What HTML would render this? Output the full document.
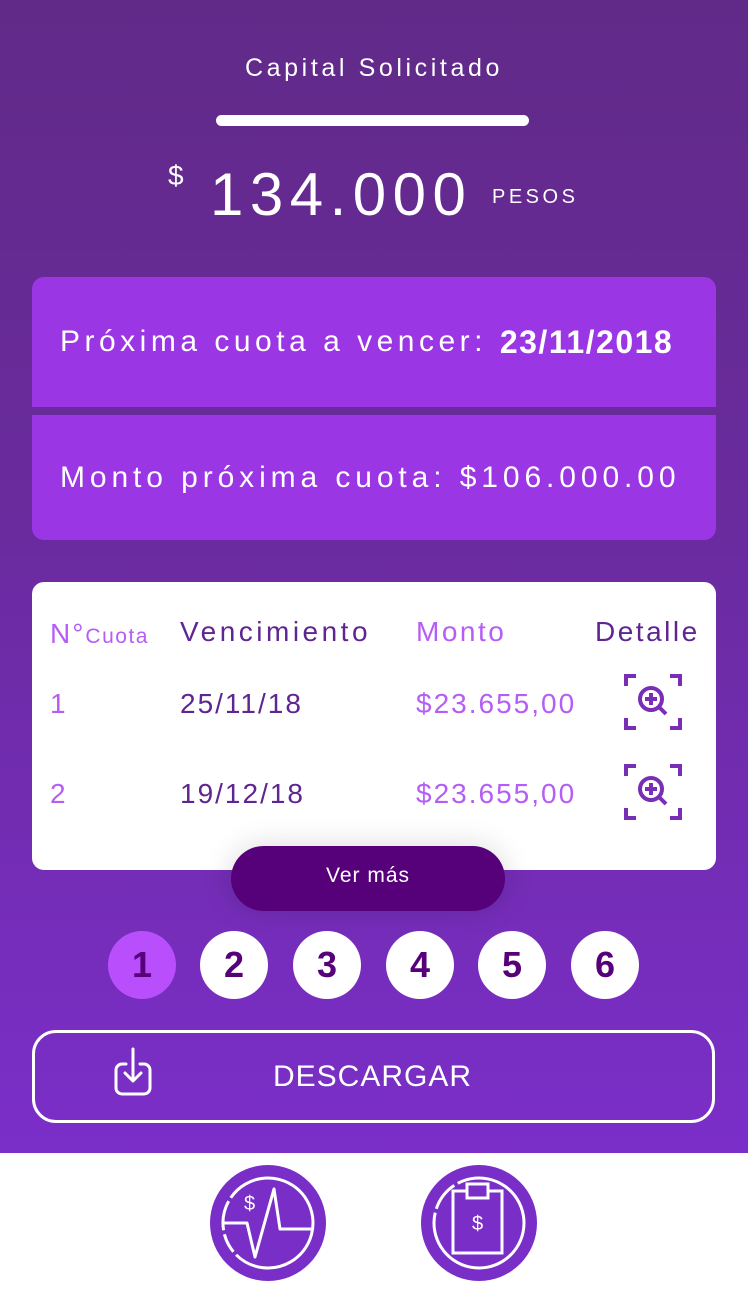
<!DOCTYPE html>
<html><head><meta charset="utf-8"><style>
*{margin:0;padding:0;box-sizing:border-box}
body{width:748px;height:1299px;position:relative;font-family:"Liberation Sans",sans-serif;background:#fff;overflow:hidden}
.bg{position:absolute;left:0;top:0;width:748px;height:1153px;background:linear-gradient(#612a88,#6a2b9e 45%,#7b2ec9)}
.a{position:absolute;white-space:nowrap}
.t{color:#fff;letter-spacing:2px}
.box{position:absolute;left:32px;width:684px;background:#9b36e4;color:#fff;font-size:30px;letter-spacing:4.5px;padding-left:28px;display:flex;align-items:center;white-space:nowrap}
.card{position:absolute;left:32px;top:582px;width:684px;height:288px;background:#fff;border-radius:12px}
.c{position:absolute;font-size:28px;letter-spacing:2px;white-space:nowrap}
.dk{color:#5f2590}.lt{color:#b55df5}
.circ{position:absolute;top:931px;width:68px;height:68px;border-radius:50%;background:#fff;color:#560079;font-weight:bold;font-size:36px;text-align:center;line-height:68px}
</style></head><body>
<div class="bg"></div>
<div class="a t" style="left:0;width:748px;top:54px;text-align:center;font-size:25px;letter-spacing:3.6px">Capital Solicitado</div>
<div class="a" style="left:216px;top:115px;width:313px;height:11px;border-radius:6px;background:#fff"></div>
<div class="a t" style="left:168px;top:160px;font-size:28px;letter-spacing:0">$</div>
<div class="a t" style="left:210px;top:160px;font-size:60px;letter-spacing:6.5px">134.000</div>
<div class="a t" style="left:492px;top:186px;font-size:20px;letter-spacing:3.5px">PESOS</div>
<div class="box" style="top:277px;height:130px;border-radius:12px 12px 0 0">Próxima cuota a vencer:&nbsp;<b style="letter-spacing:1.5px;font-size:32px">23/11/2018</b></div>
<div class="box" style="top:415px;height:125px;border-radius:0 0 12px 12px;letter-spacing:4.9px">Monto próxima cuota: $106.000.00</div>
<div class="card">
<div class="c lt" style="left:18px;top:36px">N°<span style="font-size:21px;letter-spacing:1.5px">Cuota</span></div>
<div class="c dk" style="left:148px;top:34px;letter-spacing:3.5px">Vencimiento</div>
<div class="c lt" style="left:384px;top:34px;letter-spacing:2.5px">Monto</div>
<div class="c dk" style="left:563px;top:34px;letter-spacing:2.5px">Detalle</div>
<div class="c lt" style="left:18px;top:106px">1</div>
<div class="c dk" style="left:148px;top:106px">25/11/18</div>
<div class="c lt" style="left:384px;top:106px">$23.655,00</div>
<div class="c lt" style="left:18px;top:196px">2</div>
<div class="c dk" style="left:148px;top:196px">19/12/18</div>
<div class="c lt" style="left:384px;top:196px">$23.655,00</div>
<svg class="a" style="left:592px;top:92px" width="58" height="56" viewBox="0 0 58 56" fill="none" stroke="#7a2db5" stroke-width="4"><path d="M2 12V2h10M46 2h10v10M2 44v10h10M46 54h10V44"/><circle cx="27" cy="25" r="11"/><path d="M35 33l7 7M27 19v12M21 25h12"/></svg>
<svg class="a" style="left:592px;top:182px" width="58" height="56" viewBox="0 0 58 56" fill="none" stroke="#7a2db5" stroke-width="4"><path d="M2 12V2h10M46 2h10v10M2 44v10h10M46 54h10V44"/><circle cx="27" cy="25" r="11"/><path d="M35 33l7 7M27 19v12M21 25h12"/></svg>
</div>
<div class="a" style="left:231px;top:846px;width:274px;height:65px;border-radius:33px;background:#560079;color:#fff;font-size:21px;letter-spacing:1px;text-align:center;line-height:60px;box-shadow:0 0 30px rgba(0,0,0,.15)">Ver más</div>
<div class="circ" style="left:108px;background:#b94ffc">1</div>
<div class="circ" style="left:200px">2</div>
<div class="circ" style="left:293px">3</div>
<div class="circ" style="left:386px">4</div>
<div class="circ" style="left:478px">5</div>
<div class="circ" style="left:571px">6</div>
<div class="a" style="left:32px;top:1030px;width:683px;height:93px;border:3px solid #fff;border-radius:24px"></div>
<svg class="a" style="left:112px;top:1046px" width="46" height="52" viewBox="0 0 46 52" fill="none" stroke="#fff" stroke-width="3" stroke-linecap="round" stroke-linejoin="round"><path d="M14 18h-4a6 6 0 0 0-6 6v18a6 6 0 0 0 6 6h22a6 6 0 0 0 6-6V24a6 6 0 0 0-6-6h-4M21 3v32M13 27l8 8 8-8"/></svg>
<div class="a" style="left:273px;top:1060px;color:#fff;font-size:30px;letter-spacing:1px">DESCARGAR</div>
<svg class="a" style="left:209px;top:1164px" width="118" height="118" viewBox="0 0 118 118" fill="none" stroke="#fff" stroke-width="3" stroke-linejoin="round"><circle cx="59" cy="59" r="58" fill="#7a2ec8" stroke="none"/><circle cx="59" cy="59" r="45" stroke-dasharray="200 4 20 4 30 4 300" transform="rotate(-120 59 59)"/><path d="M14 59h24l8 34 19-68 6 40h33"/><text x="35" y="46" fill="#fff" stroke="none" font-size="20" font-family="Liberation Sans">$</text></svg>
<svg class="a" style="left:420px;top:1164px" width="118" height="118" viewBox="0 0 118 118" fill="none" stroke="#fff" stroke-width="3"><circle cx="59" cy="59" r="58" fill="#7a2ec8" stroke="none"/><circle cx="59" cy="59" r="45" stroke-dasharray="230 4 30 4 300" transform="rotate(-100 59 59)"/><path d="M33 27h49v62H33z" fill="#7a2ec8"/><path d="M47 20h21v14H47z" fill="#7a2ec8"/><text x="52" y="66" fill="#fff" stroke="none" font-size="20" font-family="Liberation Sans">$</text></svg>
</body></html>
